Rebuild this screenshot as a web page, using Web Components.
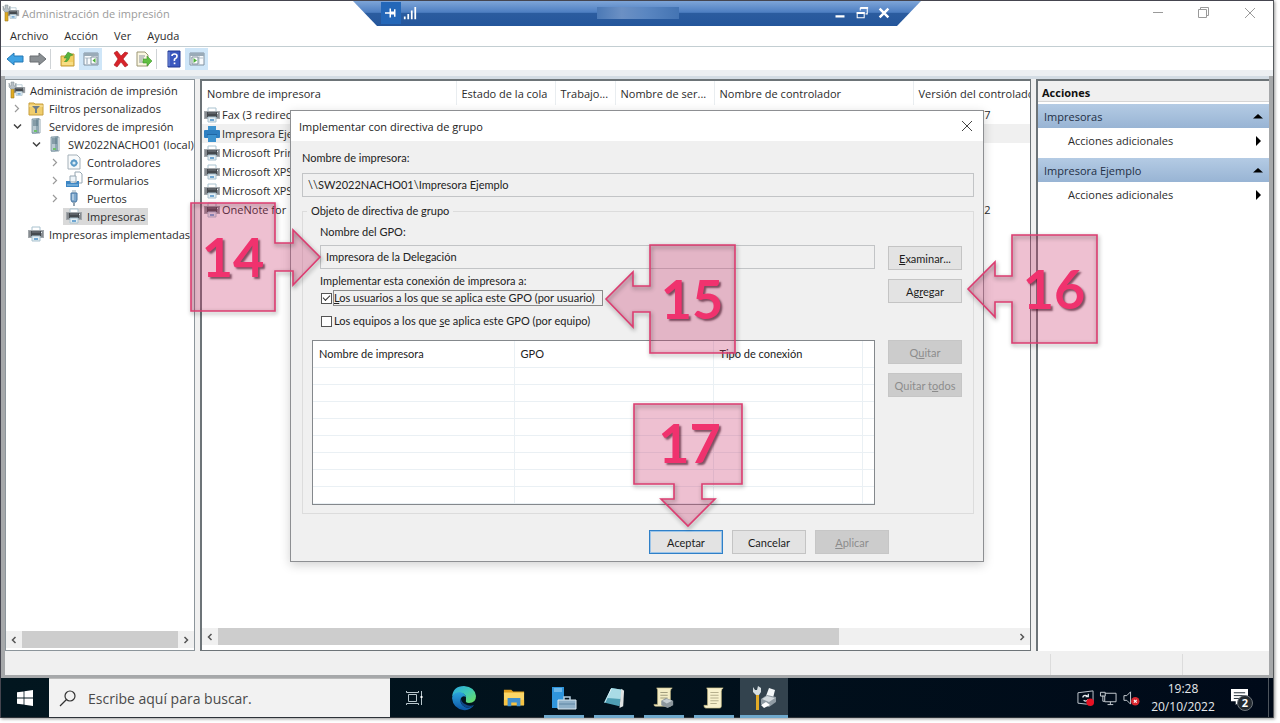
<!DOCTYPE html>
<html lang="es">
<head>
<meta charset="utf-8">
<title>Administración de impresión</title>
<style>
html, body { margin: 0; height: 100%; background: #fff; }
body { font-family: "Open Sans", "Noto Sans", sans-serif; font-size: 11px; color: #2b2b2b; }
</style>
</head>
<body>
<remote-desktop></remote-desktop>
<script>
const define = (name, html) => {
  const tpl = document.createElement('template');
  tpl.innerHTML = `<style>:host,*{box-sizing:border-box}</style>` + html;
  customElements.define(name, class extends HTMLElement {
    constructor() {
      super();
      this.attachShadow({ mode: 'open' }).append(tpl.content.cloneNode(true));
    }
  });
};

/* ---------- icon set: [grid size, artwork] ---------- */
const printer = `<path d="M4 1h8v4H4z" fill="#fff" stroke="#a9c2cf"/><path d="M0 4h16v8H0z" fill="#a3a8ac"/><path d="M1 5h14v6H1z" fill="#868b90"/><path d="M3 5h10v5H3z" fill="#44494e"/><path d="M4 6h8" stroke="#777d82"/><path d="M4 10h8v5H4z" fill="#e3edf2" stroke="#a9c2cf"/><path d="M6 12h4v2H6z" fill="#6fa6d2"/><path d="M13 6h1v1h-1z" fill="#e8eef2"/>`;
const wrench = `<path d="M2 5h3v11H2z" fill="#e0ab22" stroke="#9a7a22" stroke-width=".6"/><path d="M0 1l1 3h1V0h3v4h1l1-3 0 4-2 2H2L0 5z" fill="#b6bfc5" stroke="#7f898f" stroke-width=".5"/>`;
const server = `<path d="M4 1l7-1v15l-7 1z" fill="#8fa7b3"/><path d="M4 1h4v15H4z" fill="#b9c9d1"/><path d="M4 1h8v14H4z" fill="none" stroke="#6c8592" stroke-width=".7"/><path d="M5 3h5M5 5h5M5 7h5" stroke="#53707f"/><path d="M6 12h3v2H6z" fill="#6fc36a"/>`;
const panel = (x, g) => `<path d="M1 2h14v12H1z" fill="#f7fafc" stroke="#8091a0"/><path d="M1 2h14v3H1z" fill="#9aabb8"/><path d="M2 7h12M${x} 5v9" stroke="#b4c0ca"/><path d="M3 8h2M3 10h2M3 12h2" stroke="#91a2b1"/>${g}`;
const ICONS = {
  printer: [16, printer],
  printerblue: [16, `<path d="M4 0h8v5H4z" fill="#3d93cf"/><path d="M0 5q0-1 1-1h14q1 0 1 1v6q0 1-1 1H1q-1 0-1-1z" fill="#2e7fc1"/><path d="M4 9h8v7H4z" fill="#3d93cf"/><path d="M3 8.500h10" stroke="#1f66a5"/>`],
  manage: [16, `<g transform="translate(4 2) scale(.76)">${printer}</g>${wrench}`],
  filter: [16, `<path d="M1 3h5l1 1h8v11H1z" fill="#f0cd6c" stroke="#c79e3c"/><path d="M1 6h14" stroke="#fae7a8"/><path d="M4 6h8L9 9v4H7V9z" fill="#6b7b88"/>`],
  server: [16, server],
  gearpage: [16, `<path d="M2 1h9l3 3v11H2z" fill="#f8fafb" stroke="#a4b0b9"/><circle cx="8" cy="9" r="2.500" fill="#dcecf6" stroke="#5d9bc7" stroke-width="1.800"/><path d="M8 5v2M8 11v2M4 9h2M10 9h2" stroke="#5d9bc7"/>`],
  forms: [16, `<path d="M9 0h5l2 2v9H9z" fill="#fff" stroke="#96a7b3"/><path d="M4 4h6v6H4z" fill="#eef5fa" stroke="#96a7b3"/><path d="M0 9h4l1 2h5l1-2h2v6H0z" fill="#3c86c4"/><path d="M1 13h11" stroke="#9ecbea"/>`],
  port: [16, `<path d="M6 0h4v3H6z" fill="#c8d3da"/><path d="M5 3h6v7l-1 2H6l-1-2z" fill="#7fa8cc" stroke="#4877a4"/><path d="M7 4v6" stroke="#dceaf5"/><path d="M7 12h2v4H7z" fill="#93a5b2"/>`],
  back: [16, `<path d="M0 8l7-6v3h9v6H7v3z" fill="#3fa3e4" stroke="#2579b5"/>`],
  next: [16, `<path d="M16 8L9 2v3H0v6h9v3z" fill="#8a8f93" stroke="#6a6f73"/>`],
  up: [16, `<path d="M1 5h5l1-2h7v12H1z" fill="#f3cf63" stroke="#c39b38"/><path d="M3 12q3-2 4-5H4l4-6 5 3-3 1q-1 6-7 7z" fill="#55b33e" stroke="#378a28" stroke-width=".5"/><path d="M2 11h11v3H2z" fill="#f8dd83"/>`],
  paneleft: [16, panel(10, `<path d="M8 6h6v7H8z" fill="#fff" stroke="#8091a0"/><path d="M12.500 7v5L9.500 9.500z" fill="#4caf3c"/>`)],
  paneright: [16, panel(10, `<path d="M3 6h6v7H3z" fill="#fff" stroke="#8091a0"/><path d="M4.500 7v5l3.500-2.500z" fill="#4caf3c"/>`)],
  delete: [16, `<path d="M1 2l3-2 4 5 4-4 3 1-5 6 5 6-3 2-4-5-4 5-3-2 4-6z" fill="#d8232a" stroke="#a8151b" stroke-width=".6"/>`],
  export: [16, `<path d="M1 1h8l3 3v11H1z" fill="#fbf7e2" stroke="#9c9674"/><path d="M3 5h6M3 7h5M3 9h3M3 11h4" stroke="#8b93a0"/><path d="M7 8h4V5l5 5-5 5v-3H7z" fill="#61bf42" stroke="#3c962c" stroke-width=".6"/>`],
  help: [16, `<path d="M2 0h12v16H2z" fill="#3a58bf" stroke="#233b94"/><path d="M3 1v14" stroke="#7d94de"/><path d="M6 5q0-2 2.500-2T11 5t-1.500 2.500T8.500 10" fill="none" stroke="#fff" stroke-width="1.600"/><path d="M7.700 11.500h1.700v1.700H7.700z" fill="#fff"/>`],
  chevright: [16, `<path d="M6 5l3.500 3.500L6 12" fill="none" stroke="#9a9a9a" stroke-width="1.200"/>`],
  chevdown: [16, `<path d="M5 6.500l3.500 3.500L12 6.500" fill="none" stroke="#404040" stroke-width="1.500"/>`],
  scrollleft: [16, `<path d="M9.500 5l-3 3 3 3" fill="none" stroke="#555" stroke-width="1.500"/>`],
  scrollright: [16, `<path d="M6.500 5l3 3-3 3" fill="none" stroke="#555" stroke-width="1.500"/>`],
  min: [16, `<path d="M3 7.500h10" stroke="currentColor"/>`],
  restore: [16, `<path d="M2.500 4.500h8v8h-8zM4.500 4.500v-2h8v8h-2" fill="none" stroke="currentColor"/>`],
  close: [16, `<path d="M3 3l10 10M13 3L3 13" stroke="currentColor"/>`],
  rmin: [16, `<path d="M2 11h12v3H2z" fill="#fff"/>`],
  rrestore: [16, `<path d="M2.500 7.500h8v6h-8zM6 5V2.500h8V9h-2" fill="none" stroke="#fff" stroke-width="1.200"/><path d="M2 7h9v2H2zM6 1h9v2H6z" fill="#fff"/>`],
  rclose: [16, `<path d="M3 3l10 10M13 3L3 13" stroke="#fff" stroke-width="2.800"/>`],
  pin: [16, `<path d="M0 8h6M7 2v12M7 8h6M13 3v10" fill="none" stroke="#fff" stroke-width="2"/><path d="M8 6h4v4H8z" fill="#fff"/>`],
  signal: [16, `<path d="M2 15v-3M6 15V9M10 15V5M14 15V1" stroke="#fff" stroke-width="2"/>`],
  tri: [16, `<path d="M3 10.500L8 6l5 4.500z" fill="#000"/>`],
  triright: [16, `<path d="M6 3l5 5-5 5z" fill="#000"/>`],
  win: [16, `<path d="M0 2.300L6.600 1.400v6.200H0zM7.400 1.300L16 0v7.600H7.400zM0 8.400h6.600v6.200L0 13.700zM7.400 8.400H16V16l-8.600-1.300z" fill="#fff"/>`],
  search: [16, `<circle cx="10" cy="6" r="5" fill="none" stroke="#333" stroke-width="1.200"/><path d="M6.500 9.500L0 16" stroke="#333" stroke-width="1.300"/>`],
  taskview: [16, `<path d="M2.500 4.500h8v7h-8zM.500 1v1.500h12V1M.500 15v-1.500h12V15M15.500 1v14" fill="none" stroke="#b9c7cd"/><path d="M14.500 6h2v2h-2z" fill="#fff"/>`],
  edge: [24, `<defs><linearGradient id="a" x1="0" y1="0" x2="1" y2="1"><stop offset="0" stop-color="#2aa6e4"/><stop offset=".5" stop-color="#3fc9b4"/><stop offset="1" stop-color="#6fe05a"/></linearGradient><linearGradient id="b" x1="0" y1="0" x2="0" y2="1"><stop offset="0" stop-color="#2ba5dd"/><stop offset="1" stop-color="#0d56a6"/></linearGradient></defs><path d="M0 11Q1 0 12 0q11 1 12 10 0 7-7 7-4 0-3-3 1-6-5-7-7 0-9 4z" fill="url(#a)"/><path d="M0 12q1-6 8-6 5 1 6 5-3-2-5 1-2 6 4 9 4 2 9-2-4 6-11 5Q1 22 0 12z" fill="url(#b)"/><path d="M9 12q-2 6 4 9 4 2 9-2-5 2-9-1-4-2-4-6z" fill="#0e4587"/>`],
  explorer: [24, `<path d="M1 3h8l2 2h12v3H1z" fill="#dc9b1d"/><path d="M1 6h22v14H1z" fill="#fbd667"/><path d="M1 14h22v6H1z" fill="#f6c343"/><path d="M5 12h14v9h-4v-4H9v4H5z" fill="#3f8fce"/>`],
  srvmgr: [24, `<path d="M0 1h12v21H0z" fill="#2f95dc"/><path d="M2 3h8M2 5h8" stroke="#a8d9f8"/><path d="M6 14h18v9H6z" fill="#8fb0c8" stroke="#dbe9f2"/><path d="M12 14v-3h6v3" fill="none" stroke="#b7cfe0" stroke-width="1.500"/><path d="M7 18h16" stroke="#5f86a4"/>`],
  notepad: [24, `<path d="M9 1l12 2-3 18-17-4z" fill="#4f9fb4"/><path d="M9 1l12 2-2 10-14-1z" fill="#a9dbe6"/><path d="M20 2l3 2-1 17-4 2z" fill="#dfe2e2"/><path d="M2 17L9 2" stroke="#e9f6f8"/>`],
  scrollprn: [24, `<path d="M4 1h17q-2 1-2 4v16H3q-2 0-2-2h4V4q0-2-1-3z" fill="#f3ecc5" stroke="#bdb27e" stroke-width=".7"/><path d="M8 6h8M8 9h8M8 12h8" stroke="#9a9577"/><path d="M9 15l5-3 8 3v5l-6 3-7-3z" fill="#8d979d"/><path d="M10 15l5-2 6 2-6 3z" fill="#c6ced2"/>`],
  scroll: [24, `<path d="M4 1h18q-2 1-2 4v16q0 2-2 2H3q-2 0-2-3h4V4q0-2-1-3z" fill="#f8f1cd" stroke="#c7bb83" stroke-width=".7"/><path d="M8 6h9M8 9h9M8 12h9M8 15h9M8 18h7" stroke="#b0aa88"/>`],
  printmgr: [24, `<path d="M4 7h3v17H4z" fill="#e3ab26"/><path d="M1 1l2 3h2L6 0l3 2v4L7 9H4L1 6z" fill="#d5dde1"/><path d="M14 10l3-8 6 2-2 8z" fill="#f3f7f9"/><path d="M9 13l6-4 9 2v5l-7 5-8-3z" fill="#8f9ba3"/><path d="M10 13l5-3 8 2-6 4z" fill="#d3dade"/><path d="M9 19l5-3 4 3-6 3z" fill="#fff"/>`],
  update: [18, `<path d="M1 4l16-2v13l-7 1-9-1z" fill="none" stroke="#c6ccd3"/><path d="M6 9q1-3 4-2l2 1M12 11q-2 3-5 1M12 5v3H9" fill="none" stroke="#e6eaee" stroke-width="1.300"/><circle cx="14" cy="14" r="4" fill="#e81123"/>`],
  network: [18, `<path d="M5 4.500h12v9H5zM8 16.500h6M11 13.500v3" fill="none" stroke="#ccd2d8"/><path d="M.500 3.500h5v4h-5z" fill="#0a1622" stroke="#ccd2d8"/><path d="M3 7v6h2" fill="none" stroke="#ccd2d8"/>`],
  volume: [18, `<path d="M1 7h3l4-4v13l-4-4H1z" fill="none" stroke="#ccd2d8"/><circle cx="13" cy="13" r="4.500" fill="#d9262e"/><path d="M11.500 11.500l3 3M14.500 11.500l-3 3" stroke="#fff" stroke-width="1.200"/>`],
  note: [18, `<path d="M0 0h18v13H9l-4 4v-4H0z" fill="#fff"/><path d="M3 4h12M3 7h12M3 10h7" stroke="#1b2630"/>`]
};
customElements.define('ui-icon', class extends HTMLElement {
  connectedCallback() {
    if (this.shadowRoot) return;
    const [box, art] = ICONS[this.getAttribute('name')];
    const size = this.getAttribute('size') || 16;
    this.attachShadow({ mode: 'open' }).innerHTML =
      `<style>:host{display:block;flex:none}svg{display:block;overflow:visible}</style><svg aria-hidden="true" width="${size}" height="${size}" viewBox="0 0 ${box} ${box}">${art}</svg>`;
  }
});

/* ---------- annotation arrows ---------- */
const SHAPES = {
  right: [130, 108, 'M1 0H85V40H103V27L130 54L103 82V68H85V108H1Z', '0 44px 0 0'],
  left: [130, 108, 'M130 0H45V41H28V27L1 54L28 82V67H45V108H130Z', '0 0 0 44px'],
  down: [109, 123, 'M1 1H109V81H69V96H82L55 123L28 96H41V81H1Z', '0 0 44px 4px']
};
customElements.define('step-callout', class extends HTMLElement {
  connectedCallback() {
    if (this.shadowRoot) return;
    const [w, h, d, pad] = SHAPES[this.getAttribute('point')];
    this.attachShadow({ mode: 'open' }).innerHTML = `<style>
      *{box-sizing:border-box}
      :host{display:block;position:absolute;width:${w}px;height:${h}px}
      svg{position:absolute;inset:0;overflow:visible}
      .edge{filter:drop-shadow(1px 2px 2px rgba(0,0,0,.45))}
      div{position:relative;height:100%;padding:${pad};display:flex;align-items:center;justify-content:center;font:700 54px/54px Lato,"Open Sans",sans-serif;color:#f0326e;text-shadow:2px 2px 2px rgba(70,20,40,.65)}
      </style><svg aria-hidden="true" width="${w}" height="${h}"><path d="${d}" fill="#c82e68" fill-opacity=".3"/><path class="edge" d="${d}" fill="none" stroke="#dc3c70" stroke-width="1.600"/></svg><div><slot></slot></div>`;
  }
});

/* ---------- remote session bar ---------- */
define('session-bar', `<style>
:host{display:block;width:568px;height:25px}
div{display:grid;grid-template-columns:1fr auto 1fr;align-items:center;height:25px;padding:0 27px 2px 28px;clip-path:polygon(0 0,100% 0,544px 100%,24px 100%);background:linear-gradient(#7ea5d8,#4e7fc2 45%,#2b5c9f 50%,#24569b);}
span{display:flex;align-items:center;gap:2px}
span:last-child{justify-content:end}
button{border:0;padding:0;background:none;width:20px;display:grid;place-items:center;height:22px}
button.pin{background:#2467b8}
i{display:block;width:82px;height:12px;background:linear-gradient(90deg,#4b79b6,#6b90c4 30%,#5a86c1 60%,#4474b3)}
</style><div><span><button class="pin" aria-label="Anclar"><ui-icon name="pin" size="12"></ui-icon></button><ui-icon name="signal" size="14"></ui-icon></span><i></i><span><button aria-label="Minimizar"><ui-icon name="rmin" size="12"></ui-icon></button><button aria-label="Restaurar"><ui-icon name="rrestore" size="14"></ui-icon></button><button aria-label="Cerrar"><ui-icon name="rclose" size="14"></ui-icon></button></span></div>`);

/* ---------- window chrome ---------- */
define('title-bar', `<style>
:host{display:flex;align-items:center;height:24px;padding:0 0 0 2px;gap:3px;color:#9b9b9b}
h1{font:inherit;margin:0;flex:1}
nav{display:flex;color:#9a9a9a}
button{border:0;background:none;padding:0;width:46px;height:22px;display:grid;place-items:center;color:inherit}
</style><ui-icon name="manage"></ui-icon><h1>Administración de impresión</h1><nav><button aria-label="Minimizar"><ui-icon name="min"></ui-icon></button><button aria-label="Restaurar"><ui-icon name="restore"></ui-icon></button><button aria-label="Cerrar"><ui-icon name="close"></ui-icon></button></nav>`);

define('menu-bar', `<style>
:host{display:flex;height:22px;align-items:center;gap:16px;padding:0 9px;border-bottom:1px solid #c3ced2}
button{border:0;background:none;padding:0;font:inherit;color:inherit}
</style><button>Archivo</button><button>Acción</button><button>Ver</button><button>Ayuda</button>`);

define('tool-bar', `<style>
:host{display:flex;align-items:center;height:23px;padding:0 2px}
button{border:0;background:none;padding:0;width:23px;height:22px;display:grid;place-items:center}
.on{background:#cfe6f8}
hr{width:1px;height:20px;margin:0 5px 0 1px;border:0;background:#cfd3d6}
.gap{width:7px}
</style><button aria-label="Atrás"><ui-icon name="back"></ui-icon></button><button aria-label="Adelante"><ui-icon name="next"></ui-icon></button><hr><button aria-label="Subir un nivel"><ui-icon name="up"></ui-icon></button><button class="on" aria-label="Árbol de consola"><ui-icon name="paneleft"></ui-icon></button><span class="gap"></span><button aria-label="Eliminar"><ui-icon name="delete"></ui-icon></button><button aria-label="Exportar lista"><ui-icon name="export"></ui-icon></button><hr><button aria-label="Ayuda"><ui-icon name="help"></ui-icon></button><button class="on" aria-label="Panel de acciones"><ui-icon name="paneright"></ui-icon></button>`);

define('scroll-strip', `<style>
:host{display:flex;align-items:center;height:17px;background:#f0f0f0}
.track{flex:1;height:17px}
.thumb{height:100%;width:var(--thumb,100%);background:#cdcdcd}
</style><ui-icon name="scrollleft"></ui-icon><div class="track"><div class="thumb"></div></div><ui-icon name="scrollright"></ui-icon>`);

define('tree-node', `<style>
:host{display:flex;align-items:center;height:18px;white-space:nowrap;padding-left:calc(3px + var(--level,0)*19px)}
:host([root]){padding-left:0}
:host([root]) .twist{display:none}
.twist{width:16px;flex:none}
.label{display:flex;align-items:center;gap:5px;height:17px;padding:0 3px}
:host([selected]) .label{background:#d9d9d9}
</style><span class="twist"><slot name="twist"></slot></span><span class="label"><slot name="icon"></slot><slot></slot></span>`);

define('console-tree', `<style>
:host{display:flex;flex-direction:column;background:#fff;border:1px solid #8c959b;min-width:0;overflow:hidden;padding-bottom:2px}
div{flex:1;padding-top:1px;min-height:0;overflow:hidden}
</style><div>
<tree-node root><ui-icon slot="icon" name="manage"></ui-icon>Administración de impresión</tree-node>
<tree-node><ui-icon slot="twist" name="chevright"></ui-icon><ui-icon slot="icon" name="filter"></ui-icon>Filtros personalizados</tree-node>
<tree-node><ui-icon slot="twist" name="chevdown"></ui-icon><ui-icon slot="icon" name="server"></ui-icon>Servidores de impresión</tree-node>
<tree-node style="--level:1"><ui-icon slot="twist" name="chevdown"></ui-icon><ui-icon slot="icon" name="server"></ui-icon>SW2022NACHO01 (local)</tree-node>
<tree-node style="--level:2"><ui-icon slot="twist" name="chevright"></ui-icon><ui-icon slot="icon" name="gearpage"></ui-icon>Controladores</tree-node>
<tree-node style="--level:2"><ui-icon slot="twist" name="chevright"></ui-icon><ui-icon slot="icon" name="forms"></ui-icon>Formularios</tree-node>
<tree-node style="--level:2"><ui-icon slot="twist" name="chevright"></ui-icon><ui-icon slot="icon" name="port"></ui-icon>Puertos</tree-node>
<tree-node style="--level:2" selected><ui-icon slot="icon" name="printer"></ui-icon>Impresoras</tree-node>
<tree-node><ui-icon slot="icon" name="printer"></ui-icon>Impresoras implementadas</tree-node>
</div><scroll-strip></scroll-strip>`);

define('printer-list', `<style>
:host{display:flex;flex-direction:column;background:#fff;border:solid #6d7478;border-width:2px 1px 1px 2px;min-width:0;overflow:hidden;padding-bottom:5px}
div{flex:1;min-height:0;overflow:hidden}
table{table-layout:fixed;border-collapse:collapse;width:860px}
th{font-weight:400;text-align:left;height:24px;padding:1px 5px 0;border-right:1px solid #e9edf0;white-space:nowrap;overflow:hidden;text-overflow:ellipsis}
td{height:19px;padding:0 1px 0 2px;white-space:nowrap;overflow:hidden}
td span{display:flex;align-items:center;gap:2px}
td:last-child{text-align:right;padding-right:71px}
.sel{background:#f0f0f0}
</style><div><table><colgroup><col style="width:254px"><col style="width:99px"><col style="width:60px"><col style="width:99px"><col style="width:199px"><col></colgroup>
<thead><tr><th>Nombre de impresora</th><th>Estado de la cola</th><th>Trabajo...</th><th>Nombre de ser...</th><th>Nombre de controlador</th><th>Versión del controlador</th></tr></thead>
<tbody>
<tr><td><span><ui-icon name="printer"></ui-icon>Fax (3 redirec</span></td><td></td><td></td><td></td><td></td><td>37</td></tr>
<tr class="sel"><td><span><ui-icon name="printerblue"></ui-icon>Impresora Eje</span></td><td></td><td></td><td></td><td></td><td></td></tr>
<tr><td><span><ui-icon name="printer"></ui-icon>Microsoft Prin</span></td><td></td><td></td><td></td><td></td><td></td></tr>
<tr><td><span><ui-icon name="printer"></ui-icon>Microsoft XPS</span></td><td></td><td></td><td></td><td></td><td></td></tr>
<tr><td><span><ui-icon name="printer"></ui-icon>Microsoft XPS</span></td><td></td><td></td><td></td><td></td><td></td></tr>
<tr><td><span><ui-icon name="printer"></ui-icon>OneNote for</span></td><td></td><td></td><td></td><td></td><td>2</td></tr>
</tbody></table></div><scroll-strip style="--thumb:78%"></scroll-strip>`);

define('action-group', `<style>
:host{display:block}
h3{margin:0;height:24px;display:flex;align-items:center;justify-content:space-between;font:inherit;padding:0 3px 0 6px;background:linear-gradient(#b4cbe4,#98b4d4);color:#1f2f45}
button{display:flex;width:100%;height:30px;padding:0 3px 5px 30px;align-items:center;justify-content:space-between;border:0;background:none;font:inherit;color:inherit}
</style><h3><slot></slot><ui-icon name="tri"></ui-icon></h3><button>Acciones adicionales<ui-icon name="triright"></ui-icon></button>`);

define('actions-pane', `<style>
:host{display:block;background:#fff;border:solid #6d7478;border-width:2px 0 0 2px}
h2{margin:0 0 2px;font:inherit;font-weight:700;color:#111;height:21px;line-height:24px;padding-left:4px;background:#f0f0f0;border-bottom:1px solid #d5d5d5}
</style><h2>Acciones</h2><action-group>Impresoras</action-group><action-group>Impresora Ejemplo</action-group>`);

define('status-bar', `<style>
:host{display:flex;height:24px;justify-content:flex-end;background:#f0f0f0;padding-top:3px}
i{width:132px;border-left:1px solid #dcdcdc}
i:last-child{width:87px}
</style><i></i><i></i>`);

/* ---------- deployment dialog ---------- */
define('push-button', `<style>
:host{display:block;width:74px}
button{width:100%;height:24px;padding:0;border:1px solid #c4c4c4;background:#e3e3e3;font:inherit;color:#1c1c1c}
:host([primary]) button{border:1px solid #2f80c8;box-shadow:inset 0 0 0 1px #9cc4e8}
:host([off]) button{background:#cccccc;border-color:#c6c6c6;color:#8c8c8c}
</style><button><slot></slot></button>`);

define('gpo-dialog', `<style>
:host{display:block;width:694px;border:1px solid #8d8f92;background:#f0f0f0;box-shadow:0 3px 10px rgba(0,0,0,.18);font-size:11px;color:#222}
header{display:flex;align-items:center;justify-content:space-between;height:30px;padding:0 8px;background:#fff;font-size:11px}
header button{border:0;background:none;padding:0;color:#444}
h2{font:inherit;margin:0}
.body{padding:9px 9px 7px 11px;font-family:Lato,"Open Sans",sans-serif}
label,.caption{display:block;line-height:16px}
input[type=text]{display:block;width:100%;height:24px;padding:0 5px 2px;border:1px solid #c2c4c6;background:#f0f0f0;font:inherit;color:inherit;outline:0;border-radius:0}
.body>input[type=text]{margin-top:7px}
fieldset{margin:6px 0 0;border:1px solid #dcdcdc;padding:5px 11px 8px 9px;min-width:0}
legend{padding:0 4px;margin-left:-5px;line-height:16px}
.cols{display:grid;grid-template-columns:minmax(0,1fr) 74px;column-gap:13px}
.left{padding-left:8px}
.left input[type=text]{margin:5px 0 4px}
.right{display:grid;gap:9px;align-content:start}
.right.a{padding-top:22px}
.check{display:flex;align-items:center;gap:1px;height:16px;margin:1px 0 7px}
.check input{appearance:none;margin:0 0 0 1px;width:11px;height:11px;border:1px solid #555;background:#fff;flex:none;display:grid}
.check input:checked::after{content:"";width:6px;height:3px;margin:1px;border:solid #333;border-width:0 0 1px 1px;rotate:-45deg}
.check label{padding:0 7px 0 0;border:1px solid transparent;line-height:14px}
.check .focus{border-color:#8a8a8a}
.grid{border:1px solid #84888c;background:#fff;height:165px;overflow:hidden;margin-top:4px}
table{border-collapse:collapse;table-layout:fixed;width:100%}
th{font-weight:400;text-align:left;height:26px;padding:0 6px;border-right:1px solid #eaf0f4}
td{height:17px;padding:0;border:solid #eaf0f4;border-width:1px 1px 1px 0}
th:last-child,td:last-child{border-right:0}
.right.b{padding-top:4px}
footer{display:flex;justify-content:flex-end;gap:9px;padding-top:16px;padding-right:85px}
</style>
<header><h2>Implementar con directiva de grupo</h2><button aria-label="Cerrar"><ui-icon name="close"></ui-icon></button></header>
<div class="body">
<label for="prn">Nombre de impresora:</label><input type="text" id="prn" readonly value="\\\\SW2022NACHO01\\Impresora Ejemplo">
<fieldset><legend>Objeto de directiva de grupo</legend>
<div class="cols">
<div class="left"><label for="gpo">Nombre del GPO:</label><input type="text" id="gpo" readonly value="Impresora de la Delegación">
<span class="caption">Implementar esta conexión de impresora a:</span>
<div class="check"><input type="checkbox" id="usr" checked><label for="usr" class="focus"><u>L</u>os usuarios a los que se aplica este GPO (por usuario)</label></div>
<div class="check"><input type="checkbox" id="eq"><label for="eq">Los equipos a los que <u>s</u>e aplica este GPO (por equipo)</label></div></div>
<div class="right a"><push-button><u>E</u>xaminar...</push-button><push-button>Ag<u>r</u>egar</push-button></div>
<div class="grid"><table><colgroup><col style="width:201px"><col style="width:199px"><col style="width:149px"><col></colgroup><thead><tr><th>Nombre de impresora</th><th>GPO</th><th>Tipo de conexión</th><th></th></tr></thead><tbody><tr><td></td><td></td><td></td><td></td></tr><tr><td></td><td></td><td></td><td></td></tr><tr><td></td><td></td><td></td><td></td></tr><tr><td></td><td></td><td></td><td></td></tr><tr><td></td><td></td><td></td><td></td></tr><tr><td></td><td></td><td></td><td></td></tr><tr><td></td><td></td><td></td><td></td></tr><tr><td></td><td></td><td></td><td></td></tr></tbody></table></div>
<div class="right b"><push-button off>Q<u>u</u>itar</push-button><push-button off>Quitar t<u>o</u>dos</push-button></div>
</div></fieldset>
<footer><push-button primary>Aceptar</push-button><push-button>Cancelar</push-button><push-button off><u>A</u>plicar</push-button></footer>
</div>`);

/* ---------- taskbar ---------- */
define('task-button', `<style>
:host{display:block;width:48px;height:40px}
button{width:100%;height:100%;border:0;padding:0;background:none;display:grid;place-items:center}
:host([running]) button{background:linear-gradient(#6fa9cc,#6fa9cc) center bottom/40px 3px no-repeat}
:host([active]) button{background:linear-gradient(#6fa9cc,#6fa9cc) center bottom/48px 3px no-repeat,#33434e}
</style><button><slot></slot></button>`);

define('task-bar', `<style>
:host{display:flex;height:40px;background:linear-gradient(90deg,#02161f,#01111c 50%,#000a19);color:#e6e9ec;border-bottom:1px solid #2c3238;font-size:12px}
.search{display:flex;align-items:center;gap:12px;width:341px;background:#f2f2f2;padding:0 11px;border-top:1px solid #bbb}
.search input{border:0;background:none;font:inherit;font-size:14px;flex:1;min-width:0;padding:0;outline:0}
.search input::placeholder{color:#4a4a4a;opacity:1}
.apps{display:flex;gap:2px;flex:1}
.tray{display:flex;align-items:center;gap:6px}
time{display:block;text-align:center;line-height:18px;width:66px;margin:0 9px 0 4px;white-space:nowrap}
.note{position:relative;width:28px;height:18px;margin-right:3px}
.note b{position:absolute;left:6px;top:6px;width:16px;height:16px;border-radius:50%;background:#242b31;border:1px solid #70777d;font-size:11px;line-height:14px;text-align:center;color:#fff}
.end{width:1px;margin-right:4px;align-self:stretch;background:#4d545c}
</style><task-button><ui-icon name="win"></ui-icon></task-button><div class="search"><ui-icon name="search"></ui-icon><input type="text" aria-label="Buscar" placeholder="Escribe aquí para buscar."></div>
<div class="apps"><task-button><ui-icon name="taskview"></ui-icon></task-button><task-button><ui-icon name="edge" size="24"></ui-icon></task-button><task-button><ui-icon name="explorer" size="22"></ui-icon></task-button><task-button running><ui-icon name="srvmgr" size="24"></ui-icon></task-button><task-button running><ui-icon name="notepad" size="22"></ui-icon></task-button><task-button running><ui-icon name="scrollprn" size="22"></ui-icon></task-button><task-button running><ui-icon name="scroll" size="22"></ui-icon></task-button><task-button active><ui-icon name="printmgr" size="24"></ui-icon></task-button></div>
<div class="tray"><ui-icon name="update" size="17"></ui-icon><ui-icon name="network" size="17"></ui-icon><ui-icon name="volume" size="17"></ui-icon><time>19:28<br>20/10/2022</time><div class="note"><ui-icon name="note" size="17"></ui-icon><b>2</b></div><span class="end"></span></div>`);

/* ---------- desktop ---------- */
define('remote-desktop', `<style>
:host{display:block;height:100vh;min-height:600px;padding:0 6px 5px 0;position:relative;overflow:hidden}
.screen{display:flex;flex-direction:column;height:100%;border-top:1px solid #45454f;border-left:1px solid #45454f;border-right:1px solid #55585c;box-shadow:1px 1px 3px rgba(0,0,0,.4)}
.work{flex:1;min-height:0;display:grid;grid-template-columns:190px minmax(0,1fr) 233px;gap:0 5px;background:#f0f0f0;border-top:3px solid #d3dce4}
.frame{flex:1;min-height:0;display:flex;flex-direction:column;border:solid #a6a8aa;border-width:0 4px 3px}
.strip{height:6px;background:#eceff2}
session-bar{position:absolute;top:1px;left:calc(50% - 287px)}
gpo-dialog{position:absolute;left:290px;top:110px}
</style>
<div class="screen"><title-bar></title-bar><menu-bar></menu-bar><tool-bar></tool-bar><div class="strip"></div>
<div class="frame"><div class="work"><console-tree></console-tree><printer-list></printer-list><actions-pane></actions-pane></div><status-bar></status-bar></div>
<task-bar></task-bar></div>
<session-bar></session-bar><gpo-dialog></gpo-dialog>
<step-callout point="right" style="left:190px;top:203px">14</step-callout>
<step-callout point="left" style="left:605px;top:245px">15</step-callout>
<step-callout point="left" style="left:967px;top:235px">16</step-callout>
<step-callout point="down" style="left:633px;top:403px">17</step-callout>`);
</script>
</body>
</html>
